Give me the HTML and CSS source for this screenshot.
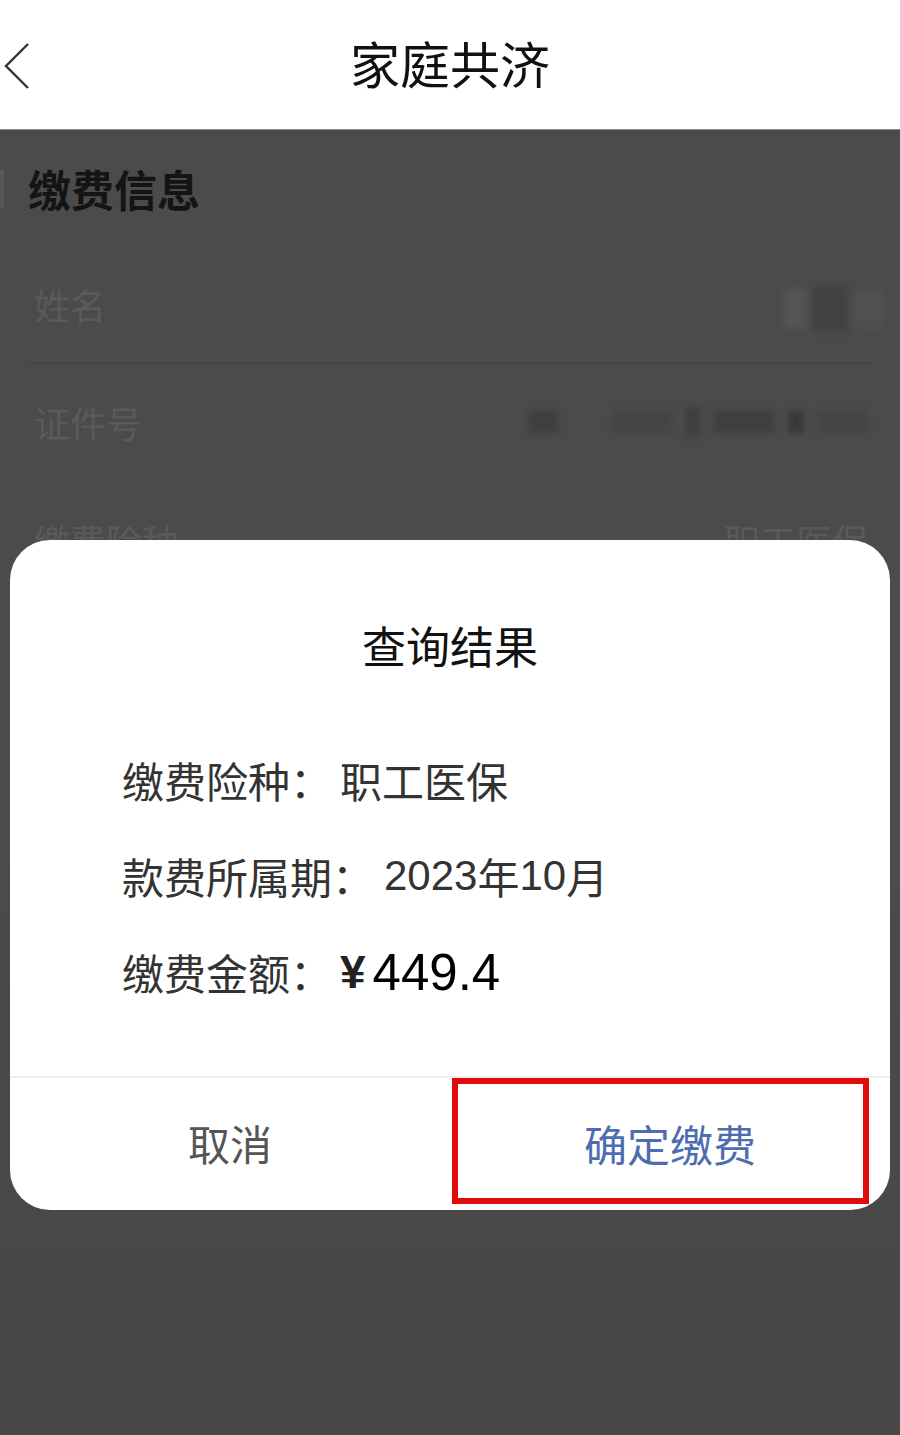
FILE: index.html
```html
<!DOCTYPE html>
<html lang="zh-CN">
<head>
<meta charset="utf-8">
<title>家庭共济</title>
<link rel="stylesheet" href="styles.css">
</head>
<body>
<div class="page">
  <header class="topbar">
    <svg class="back" width="30" height="50" viewBox="0 0 30 50"><path d="M26 3 L4 25 L26 47" fill="none" stroke="#333" stroke-width="2.4"/></svg>
    <h1 class="title">家庭共济</h1>
  </header>
  <main class="content">
    <div class="section-head"><span class="bar"></span><h2>缴费信息</h2></div>
    <div class="row">
      <span class="label">姓名</span>
      <span class="blur blur-name"><i></i><i></i><i></i></span>
    </div>
    <div class="row faint">
      <span class="label">证件号</span>
      <span class="blur blur-id"><i></i><i></i><i></i><i></i><i></i><i></i></span>
    </div>
    <div class="row">
      <span class="label">缴费险种</span>
      <span class="value">职工医保</span>
    </div>
  </main>

  <div class="overlay">
    <div class="dialog">
      <div class="dialog-title">查询结果</div>
      <ul class="info">
        <li>缴费险种：<span class="v first">职工医保</span></li>
        <li>款费所属期：<span class="v num first">2023</span><span class="v">年</span><span class="v num">10</span><span class="v">月</span></li>
        <li>缴费金额：<span class="yen">¥</span><span class="amount">449.4</span></li>
      </ul>
      <div class="actions">
        <button class="btn cancel">取消</button>
        <button class="btn confirm">确定缴费</button>
        <span class="highlight"></span>
      </div>
    </div>
  </div>
</div>
</body>
</html>
```

FILE: styles.css
```css
* { box-sizing: border-box; margin: 0; padding: 0; }
html, body { width: 900px; height: 1435px; }
body {
  font-family: "Noto Sans CJK SC", "Noto Sans", sans-serif;
  background: #4a4a4a;
  overflow: hidden;
}
.page { position: relative; width: 900px; height: 1435px; background: linear-gradient(#4b4b4b 0, #4b4b4b 60%, #474748 100%); }

.topbar {
  height: 130px;
  background: #fff;
  display: flex;
  align-items: center;
  justify-content: center;
  position: relative;
  border-bottom: 1px solid #8a8a8a;
}
.back { position: absolute; left: 2px; top: 41px; }
.title { font-size: 50px; font-weight: 400; color: #111; line-height: 1; margin-top: -6px; }

.content { padding: 0 28px; }
.section-head { display: flex; align-items: center; height: 116px; position: relative; }
.section-head .bar { position: absolute; left: -28px; top: 40px; width: 4px; height: 38px; background: #575757; }
.section-head h2 { font-size: 43px; font-weight: 700; color: #141414; line-height: 1; margin-top: 0; }

.row {
  height: 118px;
  display: flex;
  align-items: center;
  justify-content: space-between;
  border-bottom: 2px solid #454545;
  padding: 0 0 0 6px;
}
.row.faint { border-bottom-color: #4a4a4a; }
.label { font-size: 36px; color: #5a5a5a; line-height: 1; }
.value { font-size: 36px; color: #5a5a5a; line-height: 1; margin-right: 4px; }

.blur { display: flex; align-items: center; gap: 14px; filter: blur(3px); }
.blur i { display: block; height: 22px; background: #3f3f3f; }
.blur-name { margin-right: -12px; margin-top: 10px; gap: 6px; }
.blur-name i:nth-child(1) { width: 22px; height: 40px; background: #555; }
.blur-name i:nth-child(2) { width: 36px; height: 46px; background: #424242; }
.blur-name i:nth-child(3) { width: 30px; height: 40px; background: #505050; }
.blur-id { margin-right: 4px; }
.blur-id i:nth-child(1) { width: 30px; }
.blur-id i:nth-child(2) { width: 60px; background: #454545; margin-left: 40px; }
.blur-id i:nth-child(3) { width: 14px; height: 30px; }
.blur-id i:nth-child(4) { width: 60px; }
.blur-id i:nth-child(5) { width: 16px; background: #383838; }
.blur-id i:nth-child(6) { width: 50px; background: #454545; }

.overlay {
  position: absolute;
  left: 0; right: 0; top: 131px; bottom: 0;
  padding: 409px 10px 0;
}
.dialog {
  background: #fff;
  border-radius: 40px;
  height: 670px;
  padding-top: 80px;
  display: flex;
  flex-direction: column;
  position: relative;
}
.dialog-title { font-size: 44px; color: #111; text-align: center; line-height: 50px; }
.info { list-style: none; margin-top: 62px; padding-left: 112px; height: 346px; border-bottom: 2px solid #eeeeee; }
.info li { height: 96px; display: flex; align-items: center; font-size: 42px; color: #333; line-height: 1; }
.info .v { color: #333; }
.info .first { margin-left: 8px; }
.info .num { font-family: "Liberation Sans", Arial, sans-serif; font-size: 42px; }
.info .num.first { margin-left: 10px; }
.yen { font-family: "Liberation Sans", Arial, sans-serif; font-weight: 700; font-size: 46px; color: #222; margin-left: 8px; margin-right: 7px; }
.amount { font-family: "Liberation Sans", Arial, sans-serif; font-size: 51px; color: #000; }

.actions { flex: 1; display: flex; position: relative; }
.btn {
  flex: 1;
  background: none;
  border: 0;
  font-family: "Noto Sans CJK SC", "Noto Sans", sans-serif;
  font-size: 42px;
  line-height: 1;
  padding-bottom: 2px;
}
.cancel { color: #555; }
.confirm { color: #4d6db0; font-size: 43px; }
.highlight {
  position: absolute;
  left: 442px; top: 0; width: 417px; height: 126px;
  border: 6px solid #e00c0c;
}
```
